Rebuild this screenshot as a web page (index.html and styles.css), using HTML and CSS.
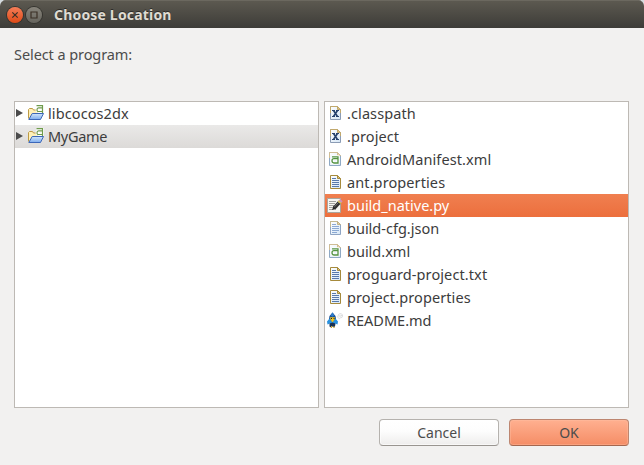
FILE: index.html
```html
<!DOCTYPE html>
<html lang="en">
<head>
<meta charset="utf-8">
<title>Choose Location</title>
<link rel="stylesheet" href="styles.css">
</head>
<body>
<svg class="defs" width="0" height="0" aria-hidden="true">
  <defs>
    <linearGradient id="paper" x1="0" y1="0" x2="1" y2="1"><stop offset="0" stop-color="#fff"/><stop offset="1" stop-color="#d5e6f6"/></linearGradient>
    <linearGradient id="folderFront" x1="0" y1="0" x2="0" y2="1"><stop offset="0" stop-color="#d3e7fb"/><stop offset="1" stop-color="#7dacee"/></linearGradient>
    <symbol id="folder" viewBox="0 0 16 16">
      <path d="M.5 13.500V4.500l1-1h3l1 1.500h4v4" fill="#fff0b8" stroke="#bd9a45"/>
      <path d="M.8 14.500 4.200 8.500H15.500L12.500 14.500Z" fill="url(#folderFront)" stroke="#3c67b8"/>
      <path d="M8.500.5h6v7.500M14.500 3h-4q-1.500 0-1.500 1.800t1.500 1.700h4" fill="none" stroke="#fff" stroke-width="2.800"/>
      <path d="M8.500.7h6v7.300M14.500 2.800h-4q-1.500 0-1.500 1.900t1.500 1.800h4" fill="#fff" stroke="#6f9b4c" stroke-width="1.200"/>
    </symbol>
    <symbol id="xfile" viewBox="0 0 16 16">
      <path d="M3.500 1.500h7l3 3v10h-10z" fill="url(#paper)" stroke="#8b9cb5"/>
      <path d="M3.500 8V1.500h7l3 3V8" fill="none" stroke="#c2a96c"/>
      <path d="M10.500 1.500v3h3z" fill="#dfc484" stroke="#c2a96c"/>
      <path d="M5 5.500h3M9 5.500h3M5 11.500h3M9 11.500h3" stroke="#26426e"/>
      <path d="m6.500 5.500 4 6M10.500 5.500l-4 6" stroke="#26426e" stroke-width="1.600"/>
    </symbol>
    <symbol id="afile" viewBox="0 0 16 16">
      <path d="M2.500 1.500h8l3 3v10h-11z" fill="url(#paper)" stroke="#8fa9c4"/>
      <path d="M2.500 7V1.500h8l3 3" fill="none" stroke="#d1bd94"/>
      <path d="M10.500 1.500v3h3z" fill="#ead5ad" stroke="#d1bd94"/>
      <path d="M5 5.800h6v7M11 7.700H7q-2 0-2 2.100T7 12h4" fill="none" stroke="#fff" stroke-width="3"/>
      <path d="M5 5.800h6v7M11 7.700H7q-2 0-2 2.100T7 12h4" fill="none" stroke="#539342" stroke-width="1.300"/>
    </symbol>
    <symbol id="textfile" viewBox="0 0 16 16">
      <path d="M3.500 1.500h7l3 3v10h-10z" fill="url(#paper)" stroke="#a68a3c"/>
      <path d="M10.500 1.500v3h3z" fill="#e3c878" stroke="#a68a3c"/>
      <path d="M5 4.500h4M5 6.500h7M5 8.500h7M5 10.500h7M5 12.500h7" stroke="#5879ac"/>
    </symbol>
    <symbol id="jsonfile" viewBox="0 0 16 16">
      <path d="M3.500 1.500h7l3 3v10h-10z" fill="url(#paper)" stroke="#8fa5c4"/>
      <path d="M3.500 7V1.500h7" fill="none" stroke="#c5b98f"/>
      <path d="M10.500 1.500v3h3z" fill="#e6d4a2" stroke="#c1b184"/>
      <path d="M5 4.500h4M5 6.500h7M5 8.500h7M5 10.500h7M5 12.500h5" stroke="#8ba9d3"/>
    </symbol>
    <symbol id="script" viewBox="0 0 16 16">
      <path d="M.5 1.500h13v14H.5z" fill="#f7f7f3" stroke="#aaa69e"/>
      <path d="M2 4.500h7M2 6.500h6M2 8.500h5M2 10.500h4M2 12.500h7" stroke="#a3a3a0"/>
      <path d="M5 13 6.500 9.300 8.800 11.600Z" fill="#222"/>
      <path d="m7.200 11 5.300-5.800" stroke="#303030" stroke-width="3.600"/>
      <path d="m7.500 9.800 4.300-4.700" stroke="#828282" stroke-width=".8"/>
      <path d="m12 5.700 1.300-1.500" stroke="#d5c35a" stroke-width="3.600"/>
      <path d="m13 4.600 1.400-1.500" stroke="#cf91bb" stroke-width="3.400"/>
    </symbol>
    <symbol id="readme" viewBox="0 0 16 16">
      <path d="M5.500.5 8.500 4 9 7l-3.500 4L2 7l.5-3z" fill="#174e94"/>
      <path d="M5.500.3 7.200 3.500l-1.700 1.200-1.700-1.200z" fill="#2c7dcc"/>
      <path d="M2.500 6.500 0 9.500l.5 3L3 11.500l2 2.500 3-2.500 2.500 1 .5-3L8.500 6.500 5.500 10z" fill="#2a92df"/>
      <path d="M3 5.300h5L7.500 7.500 5.500 10.500 3.500 7.500z" fill="#f2c51f"/>
      <path d="M4 6.500h1M6.500 6.500h1" stroke="#222"/>
      <path d="m2.500 11.500 3-1 3 1-.5 3-1 1-1.500-1-1.500 1-1.500-1z" fill="#183257"/>
      <path d="M4.500 14v2M7 14v2" stroke="#d2a62c"/>
      <path d="M11.500 2.500q1.500-1.700 3-.5 1.500.5 1 2 0 2-2 1.800-1 1.500-2 .2-1.500-.5-.5-2zM13 3v2M14.500 3v1" fill="#fafafa" stroke="#d5d7d9" stroke-width=".8"/>
    </symbol>
  </defs>
</svg>
<main class="window">
  <header class="titlebar">
    <button class="control close" aria-label="Close"><svg viewBox="0 0 16 16"><path d="m5.300 5.300 5.400 5.400m0-5.400-5.400 5.400"/></svg></button>
    <button class="control maximize" aria-label="Maximize"><svg viewBox="0 0 16 16"><path d="M5 5h6v6H5z"/></svg></button>
    <h1>Choose Location</h1>
  </header>
  <p class="prompt"><span>Select a program:</span></p>
  <div class="panes">
    <ul class="pane tree">
      <li><i class="arrow"></i><svg class="icon"><use href="#folder"/></svg><span>libcocos2dx</span></li>
      <li class="active"><i class="arrow"></i><svg class="icon"><use href="#folder"/></svg><span class="tight">MyGame</span></li>
    </ul>
    <ul class="pane files">
      <li><svg class="icon"><use href="#xfile"/></svg><span>.classpath</span></li>
      <li><svg class="icon"><use href="#xfile"/></svg><span>.project</span></li>
      <li><svg class="icon"><use href="#afile"/></svg><span>AndroidManifest.xml</span></li>
      <li><svg class="icon"><use href="#textfile"/></svg><span>ant.properties</span></li>
      <li class="selected"><svg class="icon"><use href="#script"/></svg><span class="plain">build_native.py</span></li>
      <li><svg class="icon"><use href="#jsonfile"/></svg><span class="plain">build-cfg.json</span></li>
      <li><svg class="icon"><use href="#afile"/></svg><span class="plain">build.xml</span></li>
      <li><svg class="icon"><use href="#textfile"/></svg><span>proguard-project.txt</span></li>
      <li><svg class="icon"><use href="#textfile"/></svg><span>project.properties</span></li>
      <li><svg class="icon"><use href="#readme"/></svg><span class="plain">README.md</span></li>
    </ul>
  </div>
  <footer class="actions">
    <button class="action">Cancel</button>
    <button class="action primary">OK</button>
  </footer>
</main>
</body>
</html>
```
FILE: styles.css
```css
* { box-sizing: border-box; }
body {
  margin: 0;
  background: #d5dce0;
  color: #3c3c3c;
  font: 14.5px/23px "Noto Sans", "Open Sans", sans-serif;
}
.defs { display: block; height: 0; }
.window {
  display: flex;
  flex-direction: column;
  width: 644px;
  height: 465px;
  background: #f2f1f0;
  border-radius: 6px 6px 0 0;
  overflow: hidden;
}
.titlebar {
  flex: none;
  display: flex;
  align-items: center;
  height: 28px;
  padding: 1px 7px 0;
  background: linear-gradient(#5d5a51, #3d3c38);
  box-shadow: inset 0 1px #6b685f;
}
.titlebar h1 {
  margin: 0 0 0 12px;
  color: #dfdbd2;
  font-size: 14px;
  font-weight: 700;
  letter-spacing: .18px;
  text-shadow: 0 -1px #2c2b28;
}
.control {
  width: 16px;
  height: 16px;
  margin-right: 3px;
  padding: 0;
  border: 0;
  border-radius: 50%;
  box-shadow: 0 0 0 1px #35342f;
}
.control svg { display: block; width: 16px; height: 16px; fill: none; stroke: #3b3026; stroke-width: 1.2; }
.close { background: linear-gradient(#f47d58, #df4a16); }
.maximize { background: linear-gradient(#87847b, #66645d); margin-right: 0; }
.prompt { margin: 15px 14px 0; height: 58px; color: #4c4c4c; letter-spacing: -.08px; }
.panes { display: grid; grid-template-columns: 305px 305px; gap: 5px; height: 307px; margin-left: 14px; }
.pane { margin: 0; padding: 0; list-style: none; background: #fff; border: 1px solid #bdb9b4; }
.pane li { display: flex; align-items: center; height: 23px; white-space: nowrap; letter-spacing: .1px; }
.pane .tight { letter-spacing: -.3px; }
.pane .plain { letter-spacing: 0; }
.icon { flex: none; width: 16px; height: 16px; margin-bottom: 1px; }
.tree li { padding-left: 1px; }
.tree .icon { margin: 0 4px 2px 5px; }
.arrow { width: 7px; height: 8px; margin-bottom: 1px; background: #4b4b4b; clip-path: polygon(0 0, 100% 50%, 0 100%); }
.files li { padding-left: 2px; }
.files .icon { margin-right: 4px; }
.active { background: linear-gradient(#eae9e8, #dcdad8); }
.selected { background: linear-gradient(#f07f50, #ec6f3d); color: #fff; }
.actions { display: flex; justify-content: flex-end; gap: 10px; padding: 11px 15px 0 0; }
.action {
  width: 120px;
  height: 27px;
  padding: 0;
  border: 1px solid #b5b2ae;
  border-bottom-color: #999590;
  border-radius: 4px;
  background: linear-gradient(#fff, #fdfdfd 45%, #eeedec);
  color: #4c4c4c;
  font: inherit;
  font-size: 14px;
  box-shadow: inset 0 0 0 1px #ffffff99;
}
.primary {
  border-color: #bd8670;
  border-bottom-color: #a4674f;
  background: linear-gradient(#ffb090, #f58d66);
  box-shadow: inset 0 0 0 1px #ffc0a566;
}
```
